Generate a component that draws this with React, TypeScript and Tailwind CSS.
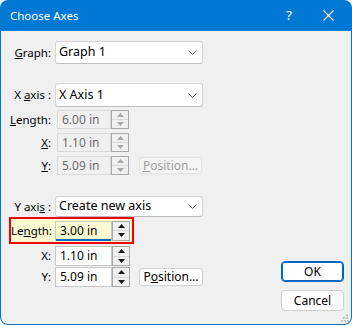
import React from "react";

const font = { fontFamily: '"Noto Sans", "Open Sans", sans-serif' };

function Chevron() {
  return (
    <svg width="9" height="5" viewBox="0 0 9 5" className="shrink-0">
      <path d="M0.5 0.5 L4.5 4.5 L8.5 0.5" fill="none" stroke="#606060" strokeWidth="1" />
    </svg>
  );
}

function Combo({ value, h }: { value: string; h: string }) {
  return (
    <div
      className={`flex items-center justify-between w-[148px] ${h} bg-white border border-[#d5d5d5] border-b-[#bdbdbd] rounded-[3px] pl-[3px] pr-[5px] text-[12.5px] text-black`}
    >
      <span>{value}</span>
      <Chevron />
    </div>
  );
}

function Arrow({ up, color }: { up?: boolean; color: string }) {
  return (
    <svg width="7" height="4" viewBox="0 0 7 4">
      <path d={up ? "M0 4 L3.5 0 L7 4 Z" : "M0 0 L3.5 4 L7 0 Z"} fill={color} />
    </svg>
  );
}

function Spin({
  value,
  w,
  h,
  disabled,
  bg,
  focused,
}: {
  value: string;
  w: string;
  h: string;
  disabled?: boolean;
  bg?: string;
  focused?: boolean;
}) {
  const arrow = disabled ? "#a8a8a8" : "#1a1a1a";
  return (
    <div className={`flex ${w} ${h}`}>
      <div
        className={`relative flex-1 flex items-center pl-[4px] border ${
          disabled ? "border-[#dadada] text-[#6d6d6d]" : "border-[#c8c8c8] text-black"
        } ${bg ?? (disabled ? "bg-[#f0f0f0]" : "bg-white")} text-[12px]`}
      >
        {value}
        {focused && <div className="absolute left-0 right-0 bottom-[-1px] h-[2px] bg-[#0067c0]" />}
      </div>
      <div className="w-[18px] flex flex-col border border-[#a8a8a8] bg-[#f0f0f0]">
        <div className="flex-1 flex items-center justify-center border-b border-[#d8d8d8]">
          <Arrow up color={arrow} />
        </div>
        <div className="flex-1 flex items-center justify-center">
          <Arrow color={arrow} />
        </div>
      </div>
    </div>
  );
}

function Label({ children, w = "w-[50px]" }: { children: React.ReactNode; w?: string }) {
  return <div className={`${w} text-right text-[11.5px] text-black shrink-0`}>{children}</div>;
}

export default function App() {
  return (
    <div className="w-[352px] h-[325px] bg-[#0078d4] rounded-[8px] flex flex-col overflow-hidden" style={font}>
      <div className="h-[31px] flex items-center text-white shrink-0">
        <span className="ml-[10px] text-[11.5px]">Choose Axes</span>
        <span className="ml-auto text-[13px] mr-[31px]">?</span>
        <svg width="11" height="11" viewBox="0 0 11 11" className="mr-[18px]">
          <path d="M0.5 0.5 L10.5 10.5 M10.5 0.5 L0.5 10.5" stroke="white" strokeWidth="1.1" />
        </svg>
      </div>
      <div className="relative flex-1 mx-[1px] mb-[1px] bg-[#f0f0f0] rounded-b-[7px] flex">
        <div className="flex flex-col">
          <div className="flex items-center gap-[4px] mt-[10px]">
            <Label>
              <u>G</u>raph:
            </Label>
            <Combo value="Graph 1" h="h-[23px]" />
          </div>

          <div className="flex items-center gap-[4px] mt-[19px]">
            <Label>
              X <u>a</u>xis :
            </Label>
            <Combo value="X Axis 1" h="h-[24px]" />
          </div>

          <div className="flex items-center gap-[6px] mt-[3px]">
            <Label>
              <u>L</u>ength:
            </Label>
            <Spin value="6.00 in" w="w-[72px]" h="h-[19px]" disabled />
          </div>
          <div className="flex items-center gap-[6px] mt-[4px]">
            <Label>
              <u>X</u>:
            </Label>
            <Spin value="1.10 in" w="w-[72px]" h="h-[19px]" disabled />
          </div>
          <div className="flex items-center gap-[6px] mt-[4px]">
            <Label>
              <u>Y</u>:
            </Label>
            <Spin value="5.09 in" w="w-[72px]" h="h-[19px]" disabled />
            <div className="ml-[4px] w-[63px] h-[17px] flex items-center justify-center rounded-[3px] border border-[#e3e3e3] bg-[#f5f5f5] text-[12px] text-[#a0a0a0]">
              <span>
                <u>P</u>osition...
              </span>
            </div>
          </div>

          <div className="flex items-center gap-[4px] mt-[21px]">
            <Label>
              Y axi<u>s</u> :
            </Label>
            <Combo value="Create new axis" h="h-[21px]" />
          </div>

          <div className="ml-[8px] w-[125px] h-[27px] border-2 border-[#f00000] bg-[#fbfbd2] flex items-center gap-[4px]">
            <Label w="w-[40px]">
              Le<u>n</u>gth:
            </Label>
            <Spin value="3.00 in" w="w-[75px]" h="h-[20px]" bg="bg-[#fbfbd2]" focused />
          </div>

          <div className="flex items-center gap-[4px] mt-[2px]">
            <Label>X:</Label>
            <Spin value="1.10 in" w="w-[75px]" h="h-[20px]" />
          </div>
          <div className="flex items-center gap-[4px] mt-[1px]">
            <Label>Y:</Label>
            <Spin value="5.09 in" w="w-[75px]" h="h-[20px]" />
            <div className="ml-[5px] w-[64px] h-[18px] flex items-center justify-center rounded-[3px] border border-[#d0d0d0] bg-white text-[12px] text-black">
              <span>
                P<u>o</u>sition...
              </span>
            </div>
          </div>
        </div>

        <div className="ml-auto flex flex-col justify-end gap-[8px] mr-[7px] mb-[13px]">
          <div className="w-[63px] h-[21px] flex items-center justify-center rounded-[4px] border border-[#0067c0] bg-white text-[12px] text-black shadow-[inset_0_0_0_1px_#0067c0]">
            OK
          </div>
          <div className="w-[63px] h-[21px] flex items-center justify-center rounded-[4px] border border-[#d0d0d0] bg-white text-[12px] text-black">
            Cancel
          </div>
        </div>

        <svg width="8" height="8" viewBox="0 0 8 8" className="absolute right-[2px] bottom-[2px]">
          <rect x="5" y="0" width="2" height="2" fill="#c4c4c4" />
          <rect x="2" y="3" width="2" height="2" fill="#c4c4c4" />
          <rect x="5" y="3" width="2" height="2" fill="#c4c4c4" />
          <rect x="0" y="6" width="2" height="2" fill="#c4c4c4" />
          <rect x="3" y="6" width="2" height="2" fill="#c4c4c4" />
          <rect x="6" y="6" width="2" height="2" fill="#c4c4c4" />
        </svg>
      </div>
    </div>
  );
}
